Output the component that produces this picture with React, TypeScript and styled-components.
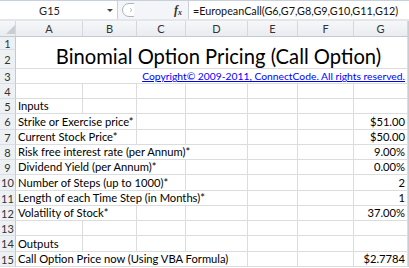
import React from "react";
import styled, { createGlobalStyle } from "styled-components";

const GlobalStyle = createGlobalStyle`
  html, body {
    margin: 0;
    padding: 0;
    background: #fff;
  }
  body {
    font-family: Lato, "Open Sans", sans-serif;
  }
`;

const COLS = "16px 67px 54px 49px 62px 50px 56px 54px 1px";
const ROW_HEIGHTS = [13, 19, 15, 15, 15, 16, 15, 15, 15, 16, 15, 15, 15, 16, 15];
const LETTERS = ["A", "B", "C", "D", "E", "F", "G"];

const Sheet = styled.div`
  width: 409px;
  height: 268px;
  overflow: hidden;
  background: #fff;
  display: flex;
  flex-direction: column;
`;

const FormulaBar = styled.div`
  display: flex;
  height: 21px;
  box-sizing: border-box;
  background: #f3f5f8;
  border-top: 1px solid #c9d0d9;
  border-bottom: 2px solid #e3e7ec;
`;

const NameBox = styled.div`
  width: 117px;
  background: #fff;
  border-right: 1px solid #c9d0d9;
  display: flex;
  align-items: center;
  font-size: 11px;
  color: #222;
  span {
    flex: 1;
    text-align: center;
    padding-right: 8px;
  }
`;

const DropArrow = styled.div`
  width: 0;
  height: 0;
  border-left: 3px solid transparent;
  border-right: 3px solid transparent;
  border-top: 3px solid #444;
  margin-right: 4px;
`;

const Tools = styled.div`
  width: 70px;
  display: flex;
  align-items: center;
  justify-content: space-between;
  padding: 0 6px 0 3px;
  box-sizing: border-box;
`;

const Fx = styled.span`
  font-family: "Liberation Serif", serif;
  font-style: italic;
  font-weight: bold;
  font-size: 12px;
  color: #333;
  sub {
    font-size: 8px;
    vertical-align: -1px;
  }
`;

const FormulaInput = styled.div`
  flex: 1;
  background: #fff;
  border-left: 1px solid #c9d0d9;
  display: flex;
  align-items: center;
  padding-left: 4px;
  font-size: 10.8px;
  color: #111;
  white-space: nowrap;
  overflow: hidden;
`;

const Grid = styled.div`
  display: grid;
  grid-template-columns: ${COLS};
  grid-template-rows: 16px ${ROW_HEIGHTS.map((h) => h + "px").join(" ")};
`;

const HeadCell = styled.div<{ $col: number; $row: number }>`
  grid-column: ${(p) => p.$col};
  grid-row: ${(p) => p.$row};
  box-sizing: border-box;
  background: linear-gradient(#f6f7f9, #e9ecf0);
  border-right: 1px solid #d3d8de;
  border-bottom: 1px solid #c3c9d1;
  color: #333;
  font-size: 11px;
  display: flex;
  align-items: center;
  justify-content: center;
`;

const RowHead = styled.div<{ $row: number }>`
  grid-column: 1;
  grid-row: ${(p) => p.$row};
  box-sizing: border-box;
  background: #eef1f4;
  border-right: 1px solid #c3c9d1;
  border-bottom: 1px solid #dadfe4;
  color: #333;
  font-size: 11px;
  display: flex;
  align-items: center;
  justify-content: center;
`;

const Cell = styled.div<{ $row: number; $col: number; $span?: number; $rows?: number; $right?: boolean }>`
  grid-column: ${(p) => p.$col} / span ${(p) => p.$span || 1};
  grid-row: ${(p) => p.$row} / span ${(p) => p.$rows || 1};
  box-sizing: border-box;
  border-right: 1px solid #dadcdd;
  border-bottom: 1px solid #dadcdd;
  display: flex;
  align-items: flex-end;
  justify-content: ${(p) => (p.$right ? "flex-end" : "flex-start")};
  padding: 0 2px;
  font-size: 11.2px;
  line-height: 14px;
  color: #000;
  white-space: nowrap;
  overflow: visible;
`;

const Title = styled(Cell)`
  justify-content: center;
  font-size: 20.2px;
  line-height: 24px;
  padding: 0 0 0 14px;
`;

const Link = styled.a`
  color: #0000ff;
  text-decoration: underline;
  font-size: 10.3px;
`;

const Edge = styled.div<{ $row: number }>`
  grid-column: 9;
  grid-row: ${(p) => p.$row};
  background: #c8ccd2;
`;

type DataRow = { n: number; label?: string; span?: number; value?: string };

const data: DataRow[] = [
  { n: 4 },
  { n: 5, label: "Inputs", span: 1 },
  { n: 6, label: "Strike or Exercise price*", span: 2, value: "$51.00" },
  { n: 7, label: "Current Stock Price*", span: 2, value: "$50.00" },
  { n: 8, label: "Risk free interest rate (per Annum)*", span: 4, value: "9.00%" },
  { n: 9, label: "Dividend Yield (per Annum)*", span: 3, value: "0.00%" },
  { n: 10, label: "Number of Steps (up to 1000)*", span: 3, value: "2" },
  { n: 11, label: "Length of each Time Step (in Months)*", span: 4, value: "1" },
  { n: 12, label: "Volatility of Stock*", span: 2, value: "37.00%" },
  { n: 13 },
  { n: 14, label: "Outputs", span: 1 },
  { n: 15, label: "Call Option Price now (Using VBA Formula)", span: 4, value: "$2.7784" },
];

function Grip() {
  return (
    <svg width="14" height="16" viewBox="0 0 14 16">
      <path d="M13 1.5 H8 A6.5 6.5 0 0 0 8 14.5 H13" fill="#fff" stroke="#aab3bf" />
      <path d="M9 6.5 A1.5 1.5 0 0 1 9 9.5" fill="none" stroke="#b8c0ca" />
    </svg>
  );
}

function DataRowCells({ row }: { row: DataRow }) {
  const r = row.n + 1;
  const span = row.span || 1;
  const cells: React.ReactNode[] = [];
  cells.push(
    <Cell key="a" $row={r} $col={2} $span={span}>
      {row.label}
    </Cell>
  );
  for (let c = 2 + span; c <= 7; c++) {
    cells.push(<Cell key={c} $row={r} $col={c} />);
  }
  cells.push(
    <Cell key="g" $row={r} $col={8} $right>
      {row.value}
    </Cell>
  );
  return <>{cells}</>;
}

export default function App() {
  return (
    <Sheet>
      <GlobalStyle />
      <FormulaBar>
        <NameBox>
          <span>G15</span>
          <DropArrow />
        </NameBox>
        <Tools>
          <Grip />
          <Fx>
            f<sub>x</sub>
          </Fx>
        </Tools>
        <FormulaInput>=EuropeanCall(G6,G7,G8,G9,G10,G11,G12)</FormulaInput>
      </FormulaBar>
      <Grid>
        <HeadCell $col={1} $row={1}>
          <svg width="9" height="9" viewBox="0 0 9 9" style={{ alignSelf: "flex-end", marginLeft: 5, marginBottom: 2 }}>
            <path d="M9 0 V9 H0 Z" fill="#c9ced5" />
          </svg>
        </HeadCell>
        {LETTERS.map((l, i) => (
          <HeadCell key={l} $col={i + 2} $row={1}>
            {l}
          </HeadCell>
        ))}
        <Edge $row={1} />
        {ROW_HEIGHTS.map((_, i) => (
          <React.Fragment key={i}>
            <RowHead $row={i + 2}>{i + 1}</RowHead>
            <Edge $row={i + 2} />
          </React.Fragment>
        ))}
        <Title $row={2} $col={2} $span={7} $rows={2}>
          Binomial Option Pricing (Call Option)
        </Title>
        <Cell $row={4} $col={2} $span={7} $right>
          <Link href="#">Copyright© 2009-2011, ConnectCode. All rights reserved.</Link>
        </Cell>
        {data.map((row) => (
          <DataRowCells key={row.n} row={row} />
        ))}
      </Grid>
    </Sheet>
  );
}
